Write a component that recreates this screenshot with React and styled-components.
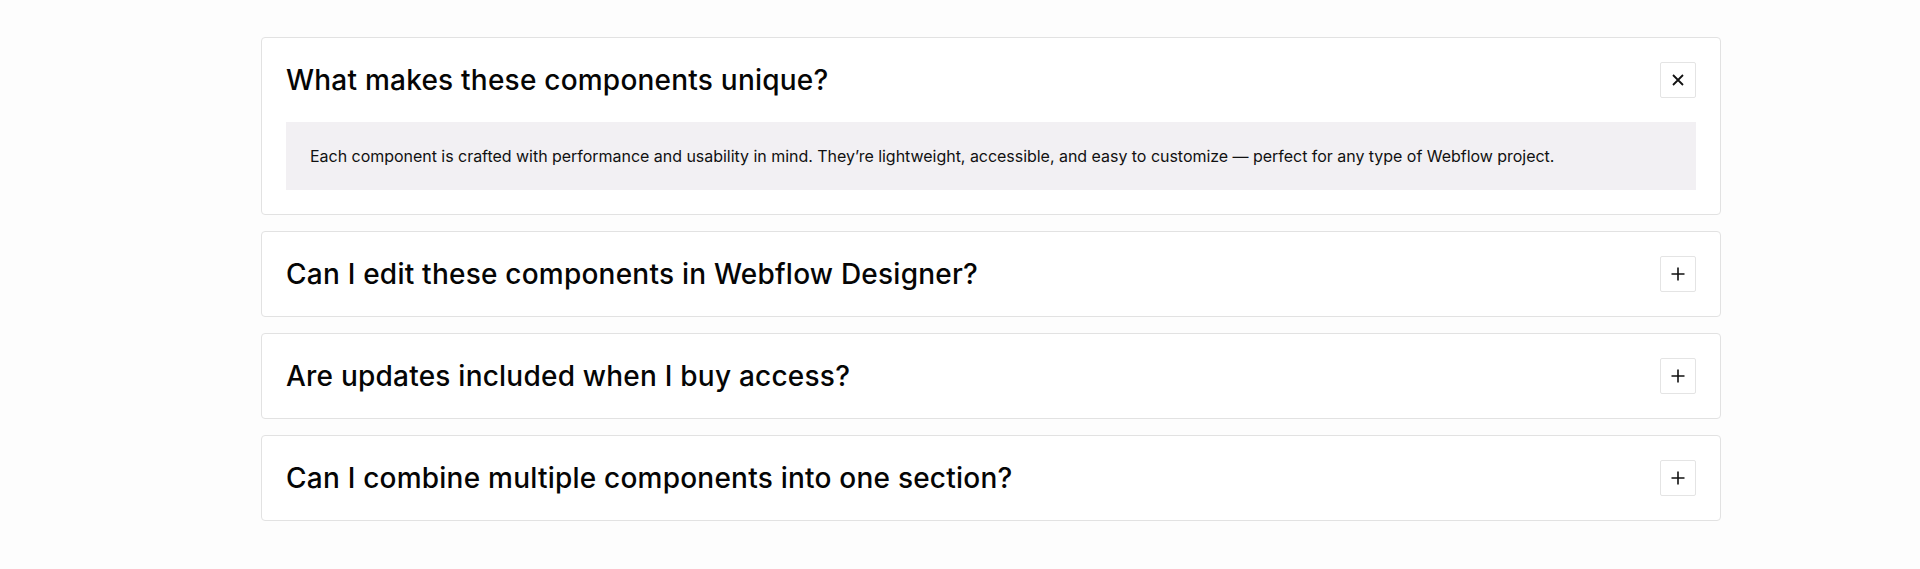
import React, { useState } from "react";
import styled, { createGlobalStyle } from "styled-components";

const Global = createGlobalStyle`
  html, body { margin: 0; padding: 0; background: #fdfdfd; }
  body { font-family: Inter, "Liberation Sans", Arial, sans-serif; color: #0b0b0b; }
`;

const Page = styled.div`
  min-height: 569px;
  box-sizing: border-box;
  padding: 37px 0 0 261px;
`;

const List = styled.div`
  width: 1460px;
  display: flex;
  flex-direction: column;
  gap: 16px;
`;

const Card = styled.div`
  background: #ffffff;
  border: 1px solid #e2e2e2;
  border-radius: 4px;
  padding: 24px;
  display: flex;
  flex-direction: column;
  gap: 24px;
`;

const Header = styled.div`
  display: flex;
  align-items: center;
  justify-content: space-between;
  height: 36px;
`;

const Question = styled.h3`
  margin: 0;
  font-size: 28px;
  font-weight: 500;
  letter-spacing: 0.008em;
  line-height: 36px;
  color: #050505;
`;

const Toggle = styled.button`
  width: 36px;
  height: 36px;
  padding: 0;
  border: 1px solid #e4e4e4;
  border-radius: 2px;
  background: #ffffff;
  display: flex;
  align-items: center;
  justify-content: center;
  cursor: pointer;
  color: #111;
`;

const Answer = styled.div`
  background: #f2f0f3;
  padding: 24px;
  font-size: 16px;
  line-height: 20px;
  letter-spacing: -0.002em;
  color: #111;
`;

const PlusIcon = () => (
  <svg width="16" height="16" viewBox="0 0 16 16" fill="none">
    <path d="M8 1.5v13M1.5 8h13" stroke="currentColor" strokeWidth="1.6" />
  </svg>
);

const CloseIcon = () => (
  <svg width="16" height="16" viewBox="0 0 16 16" fill="none">
    <path d="M3 3l10 10M13 3L3 13" stroke="currentColor" strokeWidth="1.8" />
  </svg>
);

const items = [
  {
    q: "What makes these components unique?",
    a: "Each component is crafted with performance and usability in mind. They’re lightweight, accessible, and easy to customize — perfect for any type of Webflow project.",
  },
  {
    q: "Can I edit these components in Webflow Designer?",
    a: "Yes. Every component is built natively in Webflow, so you can adjust styles, content and interactions directly in the Designer.",
  },
  {
    q: "Are updates included when I buy access?",
    a: "Yes, all future updates and new components are included with your access.",
  },
  {
    q: "Can I combine multiple components into one section?",
    a: "Absolutely. Components are designed to work together and can be combined freely.",
  },
];

export default function App() {
  const [open, setOpen] = useState(0);
  return (
    <>
      <Global />
      <Page>
        <List>
          {items.map((it, i) => (
            <Card key={i}>
              <Header>
                <Question>{it.q}</Question>
                <Toggle onClick={() => setOpen(open === i ? -1 : i)} aria-label="toggle">
                  {open === i ? <CloseIcon /> : <PlusIcon />}
                </Toggle>
              </Header>
              {open === i && <Answer>{it.a}</Answer>}
            </Card>
          ))}
        </List>
      </Page>
    </>
  );
}
